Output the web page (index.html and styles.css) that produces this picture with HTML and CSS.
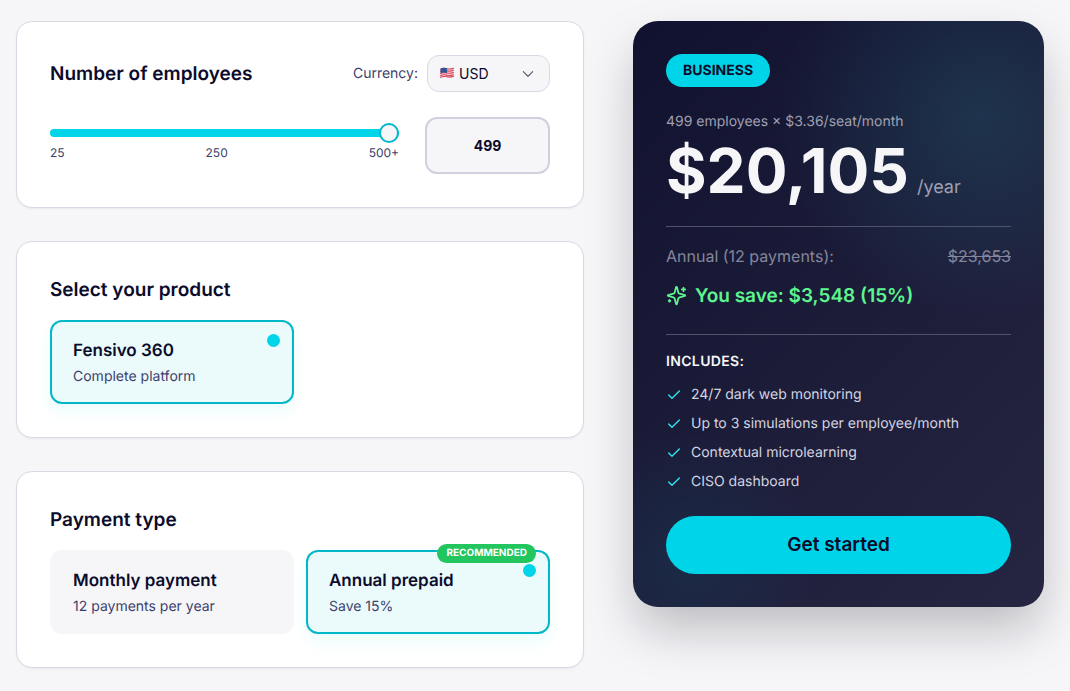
FILE: index.html
```html
<!DOCTYPE html>
<html lang="en">
<head>
    <meta charset="UTF-8">
    <meta name="viewport" content="width=device-width, initial-scale=1.0">
    <title>Fensivo - Pricing</title>
    <link rel="stylesheet" href="styles.css">
</head>
<body>
    <main class="pricing">
        <form class="options" id="pricingForm">
            <section class="card">
                <div class="card-header">
                    <h2><label for="employees">Number of employees</label></h2>
                    <div class="currency">
                        <label for="currency">Currency:</label>
                        <div class="select-wrap">
                            <select id="currency" name="currency">
                                <option value="usd">USD</option>
                                <option value="eur">EUR</option>
                            </select>
                            <svg class="flag" viewBox="0 0 26 20" aria-hidden="true">
                                <path fill="#f3d4da" d="M1 3c5-3 8-2 12-1s7 1 12-1v16c-5 2-8 2-12 1s-7-1-12 1z"/>
                                <path fill="none" stroke="#d8455a" stroke-width="2" d="M1 4c5-3 8-2 12-1s7 1 12-1M1 8c5-3 8-2 12-1s7 1 12-1M1 12c5-3 8-2 12-1s7 1 12-1M1 16c5-3 8-2 12-1s7 1 12-1M1 19c5-2 8-2 12-1s7 1 12-1"/>
                                <path fill="#2f5597" d="M1 3c5-3 8-2 12-1v9c-4-1-7-2-12 1z"/>
                            </svg>
                            <svg class="chevron" viewBox="0 0 12 12" aria-hidden="true">
                                <path d="M2 4l4 4 4-4"/>
                            </svg>
                        </div>
                    </div>
                </div>
                <div class="employees">
                    <div class="slider">
                        <input type="range" id="employees" name="employees" min="25" max="499" value="499">
                        <div class="ticks">
                            <span>25</span>
                            <span>250</span>
                            <span>500+</span>
                        </div>
                    </div>
                    <input type="text" class="count" id="count" inputmode="numeric" aria-label="Employees" value="499">
                </div>
            </section>

            <section class="card">
                <h2>Select your product</h2>
                <div class="choices">
                    <label class="choice">
                        <span class="choice-text">
                            <strong>Fensivo 360</strong>
                            <span>Complete platform</span>
                        </span>
                        <input type="radio" name="product" value="360" checked>
                    </label>
                </div>
            </section>

            <section class="card">
                <h2>Payment type</h2>
                <div class="choices">
                    <label class="choice">
                        <span class="choice-text">
                            <strong>Monthly payment</strong>
                            <span>12 payments per year</span>
                        </span>
                        <input type="radio" name="payment" value="monthly">
                    </label>
                    <label class="choice">
                        <span class="choice-text">
                            <strong>Annual prepaid</strong>
                            <span>Save 15%</span>
                        </span>
                        <input type="radio" name="payment" value="annual" checked>
                        <span class="recommended">RECOMMENDED</span>
                    </label>
                </div>
            </section>
        </form>

        <aside class="summary">
            <span class="plan">BUSINESS</span>
            <p class="rate">499 employees × $3.36/seat/month</p>
            <p class="price"><strong>$20,105</strong> <span>/year</span></p>

            <div class="savings">
                <div class="regular">
                    <span>Annual (12 payments):</span>
                    <s>$23,653</s>
                </div>
                <p class="save">
                    <svg viewBox="0 0 24 24" aria-hidden="true">
                        <path d="M9.94 15.5A2 2 0 0 0 8.5 14.06l-6.14-1.58a.5.5 0 0 1 0-.96L8.5 9.94A2 2 0 0 0 9.94 8.5l1.58-6.14a.5.5 0 0 1 .96 0l1.58 6.14a2 2 0 0 0 1.44 1.44l6.14 1.58a.5.5 0 0 1 0 .96l-6.14 1.58a2 2 0 0 0-1.44 1.44l-1.58 6.14a.5.5 0 0 1-.96 0z"/>
                        <path d="M20 3v4M22 5h-4M4 17v2M5 18H3"/>
                    </svg>
                    You save: $3,548 (15%)
                </p>
            </div>

            <h3>INCLUDES:</h3>
            <ul class="features">
                <li><svg viewBox="0 0 24 24" aria-hidden="true"><path d="M20 6L9 17l-5-5"/></svg>24/7 dark web monitoring</li>
                <li><svg viewBox="0 0 24 24" aria-hidden="true"><path d="M20 6L9 17l-5-5"/></svg>Up to 3 simulations per employee/month</li>
                <li><svg viewBox="0 0 24 24" aria-hidden="true"><path d="M20 6L9 17l-5-5"/></svg>Contextual microlearning</li>
                <li><svg viewBox="0 0 24 24" aria-hidden="true"><path d="M20 6L9 17l-5-5"/></svg>CISO dashboard</li>
            </ul>
            <button type="submit" form="pricingForm">Get started</button>
        </aside>
    </main>
</body>
</html>
```
FILE: styles.css
```css
* {
    box-sizing: border-box;
}
body {
    margin: 0;
    background: #f6f6f9;
    color: #0b0b2b;
    font-family: Inter, "Liberation Sans", sans-serif;
    font-size: 14px;
    line-height: 20px;
    text-rendering: geometricPrecision;
}
h2, h3, p, ul {
    margin: 0;
    padding: 0;
}
input, select, button {
    font: inherit;
    color: inherit;
    margin: 0;
}
.pricing {
    display: grid;
    grid-template-columns: 568fr 411fr;
    gap: 49px;
    align-items: start;
    padding: 21px 26px 21px 16px;
}

/* left column */
.options {
    display: grid;
    gap: 33px;
}
.card {
    padding: 33px;
    background: #fff;
    border: 1px solid #d9d9e4;
    border-radius: 16px;
    box-shadow: 0 1px 2px rgba(11, 11, 43, 0.05);
}
h2 {
    font-size: 19px;
    font-weight: 600;
    line-height: 29px;
}
.card-header {
    display: flex;
    align-items: center;
    justify-content: space-between;
    margin-bottom: 25px;
}
.currency {
    display: flex;
    align-items: center;
    gap: 9px;
    color: #3b3f6b;
}
.select-wrap {
    position: relative;
}
.select-wrap select {
    display: block;
    appearance: none;
    width: 123px;
    height: 37px;
    padding: 0 31px;
    background: #f6f6f9;
    border: 1px solid #d9d9e4;
    border-radius: 12px;
    color: #0b0b2b;
}
.flag, .chevron {
    position: absolute;
    pointer-events: none;
}
.flag {
    left: 13px;
    top: 12px;
    width: 14px;
    height: 11px;
}
.chevron {
    right: 15px;
    top: 12px;
    width: 14px;
    height: 14px;
    fill: none;
    stroke: #55556a;
}
.employees {
    display: flex;
    gap: 26px;
}
.slider {
    flex: 1;
    padding-top: 6px;
}
.slider input {
    display: block;
    appearance: none;
    width: 100%;
    height: 20px;
    background: none;
}
.slider input::-webkit-slider-runnable-track {
    height: 8px;
    background: #00d4e8;
    border-radius: 4px;
}
.slider input::-webkit-slider-thumb {
    appearance: none;
    width: 20px;
    height: 20px;
    margin-top: -6px;
    background: #f6f6f9;
    border: 2px solid #00b8c8;
    border-radius: 50%;
}
.ticks {
    display: flex;
    justify-content: space-between;
    font-size: 12px;
    color: #3b3f6b;
}
.count {
    width: 125px;
    height: 57px;
    background: #f6f6f9;
    border: 2px solid #d0d0de;
    border-radius: 12px;
    font-weight: 700;
    text-align: center;
}
.choices {
    display: grid;
    grid-template-columns: 1fr 1fr;
    gap: 12px;
    margin-top: 16px;
}
.choice {
    position: relative;
    display: flex;
    justify-content: space-between;
    padding: 12px 12px 13px 21px;
    background: #f6f6f9;
    border: 2px solid #f6f6f9;
    border-radius: 12px;
}
.choice:has(:checked) {
    background: #ebfafb;
    border-color: #00b8c8;
    box-shadow: 0 8px 16px rgba(0, 212, 232, 0.08);
}
.choice-text {
    display: grid;
    padding-top: 5px;
    color: #3b3f6b;
    line-height: 25px;
}
.choice-text strong {
    color: #0b0b2b;
    font-size: 17px;
    font-weight: 600;
}
.choice input {
    appearance: none;
    width: 13px;
    height: 13px;
    border-radius: 50%;
}
.choice input:checked {
    background: #00d4e8;
}
.recommended {
    position: absolute;
    top: -8px;
    right: 12px;
    padding: 0 9px;
    background: #22c55e;
    border-radius: 10px;
    color: #fff;
    font-size: 10px;
    font-weight: 700;
    line-height: 19px;
}

/* price summary */
.summary {
    padding: 33px;
    border-radius: 25px;
    background:
        radial-gradient(circle at 84% 16%, rgba(50, 180, 190, 0.16), transparent 200px),
        radial-gradient(circle at 13% 92%, rgba(0, 190, 210, 0.08), transparent 130px),
        linear-gradient(135deg, #11122f, #262642);
    color: #f6f6f9;
    box-shadow: 0 25px 50px -4px rgba(11, 11, 20, 0.25);
}
.plan {
    display: inline-block;
    padding: 0 17px;
    background: #00d4e8;
    border-radius: 17px;
    color: #0b0b2b;
    font-weight: 700;
    line-height: 33px;
}
.rate {
    margin-top: 25px;
    color: #a0a0b3;
}
.price {
    display: flex;
    align-items: baseline;
    gap: 8px;
    color: #a0a0b3;
    font-size: 18px;
}
.price strong {
    color: #f6f6f9;
    font-size: 62px;
    line-height: 78px;
}
.savings {
    margin: 16px 0;
    padding: 16px 0 24px;
    border-top: 1px solid #50526a;
    border-bottom: 1px solid #50526a;
}
.regular {
    display: flex;
    justify-content: space-between;
    color: #85869b;
    font-size: 16px;
    line-height: 26px;
}
.save {
    display: flex;
    align-items: center;
    gap: 8px;
    margin-top: 12px;
    color: #5df58f;
    font-size: 19px;
    font-weight: 600;
    line-height: 29px;
}
svg path {
    stroke-linecap: round;
    stroke-linejoin: round;
}
.save svg {
    width: 21px;
    height: 21px;
    fill: none;
    stroke: currentColor;
    stroke-width: 2;
}
h3 {
    font-size: 14px;
    font-weight: 600;
    letter-spacing: 0.025em;
    line-height: 22px;
}
.features {
    display: grid;
    gap: 8px;
    margin: 11px 0 24px;
    color: #d4d4e0;
    list-style: none;
    line-height: 21px;
}
.features li {
    display: flex;
    align-items: center;
    gap: 9px;
}
.features svg {
    width: 16px;
    height: 16px;
    fill: none;
    stroke: #2ee6f2;
    stroke-width: 2;
}
.summary button {
    width: 100%;
    height: 58px;
    background: #00d4e8;
    border: 0;
    border-radius: 29px;
    color: #0b0b2b;
    font-size: 19px;
    font-weight: 600;
}
```
